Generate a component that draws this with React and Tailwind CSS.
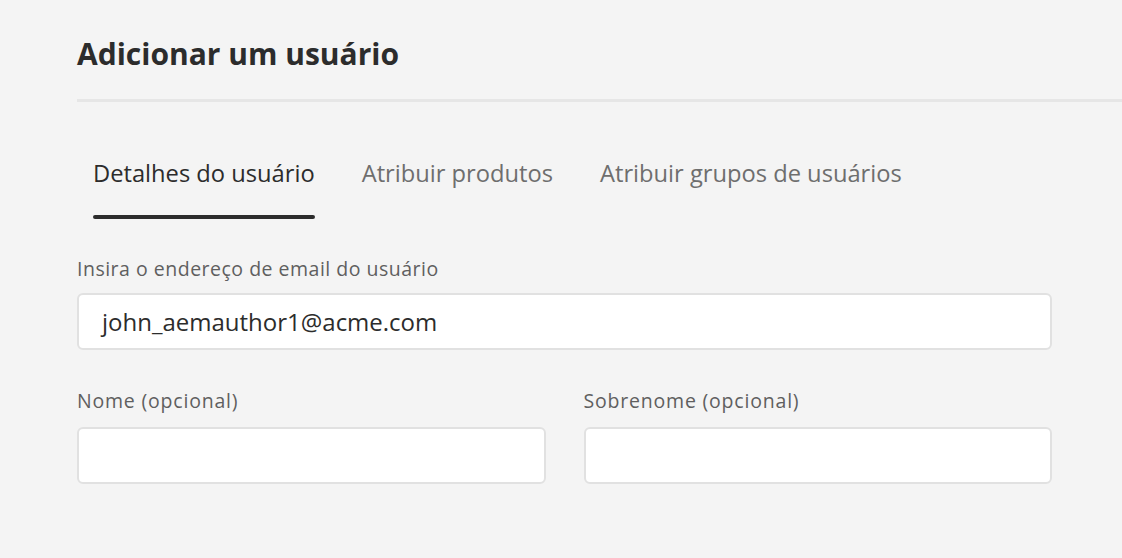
import React from "react";

const tabs = ["Detalhes do usuário", "Atribuir produtos", "Atribuir grupos de usuários"];

export default function App() {
  return (
    <div className="h-[558px] w-[1122px] overflow-hidden bg-[#f4f4f4] font-['Open_Sans',sans-serif]">
      {/* Header */}
      <div className="pl-[77px]">
        <h1 className="pt-[34px] h-[99px] text-[30px] font-bold text-[#2c2c2c] leading-[40px]">
          Adicionar um usuário
        </h1>
        <div className="h-[3px] bg-[#e6e6e6]" />
      </div>

      <div className="pl-[77px] w-[1052px]">
        {/* Tabs */}
        <div className="flex gap-[47px] pl-[16px] pt-[55px]">
          {tabs.map((t, i) => (
            <div key={t} className="flex flex-col">
              <span
                className={
                  "text-[23.7px] leading-[32px] " +
                  (i === 0 ? "text-[#2c2c2c]" : "text-[#6e6e6e]")
                }
              >
                {t}
              </span>
              <div
                className={
                  "mt-[26px] h-[4px] rounded-full " +
                  (i === 0 ? "bg-[#2c2c2c]" : "bg-transparent")
                }
              />
            </div>
          ))}
        </div>

        {/* Email */}
        <div className="mt-[38px]">
          <label className="block text-[19.5px] leading-[24px] tracking-[0.5px] text-[#5f5f5f]">
            Insira o endereço de email do usuário
          </label>
          <div className="mt-[12px] h-[57px] rounded-[6px] border-2 border-[#e1e1e1] bg-white flex items-center pl-[23px]">
            <span className="text-[24px] text-[#2c2c2c]">john_aemauthor1@acme.com</span>
          </div>
        </div>

        {/* Names */}
        <div className="mt-[39px] grid grid-cols-2 gap-[38px]">
          <div>
            <label className="block text-[19.5px] leading-[24px] tracking-[0.8px] text-[#5f5f5f]">
              Nome (opcional)
            </label>
            <div className="mt-[14px] h-[57px] rounded-[6px] border-2 border-[#e1e1e1] bg-white" />
          </div>
          <div>
            <label className="block text-[19.5px] leading-[24px] tracking-[0.8px] text-[#5f5f5f]">
              Sobrenome (opcional)
            </label>
            <div className="mt-[14px] h-[57px] rounded-[6px] border-2 border-[#e1e1e1] bg-white" />
          </div>
        </div>
      </div>
    </div>
  );
}
